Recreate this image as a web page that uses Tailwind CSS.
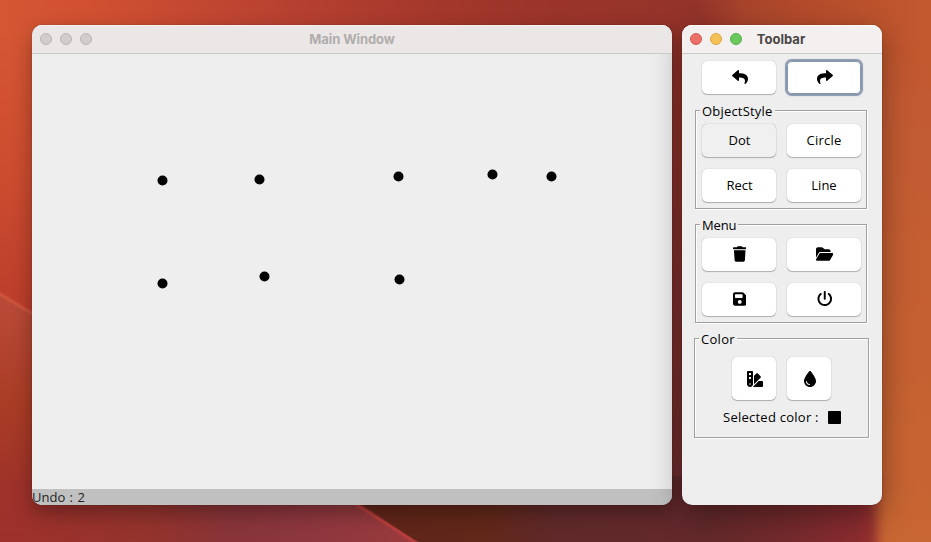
<!DOCTYPE html>
<html lang="en">
<head>
<meta charset="utf-8">
<title>Main Window</title>
<script src="https://cdn.jsdelivr.net/npm/@tailwindcss/browser@4"></script>
</head>
<body class="relative w-[931px] h-[542px] overflow-hidden bg-[#9a322a] font-['Open_Sans','Noto_Sans',sans-serif] text-[13px] font-medium text-black">
<!-- Desktop wallpaper -->
<svg class="absolute inset-0" width="931" height="542" viewBox="0 0 931 542">
  <defs>
    <linearGradient id="top" gradientUnits="userSpaceOnUse" x1="0" y1="0" x2="931" y2="0">
      <stop offset="0" stop-color="#d55633"/><stop offset=".11" stop-color="#cf4f31"/><stop offset=".26" stop-color="#bd4431"/><stop offset=".45" stop-color="#a6382c"/><stop offset=".58" stop-color="#9b3429"/><stop offset=".75" stop-color="#93332a"/><stop offset=".8" stop-color="#a8442b"/><stop offset=".86" stop-color="#b34b2b"/><stop offset="1" stop-color="#c3592f"/>
    </linearGradient>
    <linearGradient id="left" x1="0" y1="0" x2="0" y2="1"><stop offset="0" stop-color="#d55633"/><stop offset=".3" stop-color="#cb4b2f"/><stop offset=".55" stop-color="#bb3d2b"/><stop offset="1" stop-color="#a83028"/></linearGradient>
    <linearGradient id="fold" gradientUnits="userSpaceOnUse" x1="0" y1="295" x2="0" y2="542"><stop offset="0" stop-color="#ba4b38"/><stop offset=".45" stop-color="#a93c25"/><stop offset=".75" stop-color="#a03329"/><stop offset="1" stop-color="#9d302b"/></linearGradient>
    <linearGradient id="base" gradientUnits="userSpaceOnUse" x1="0" y1="0" x2="931" y2="0"><stop offset="0" stop-color="#9d302b" stop-opacity="0"/><stop offset=".04" stop-color="#9c312b"/><stop offset=".17" stop-color="#93332d"/><stop offset=".25" stop-color="#883439"/><stop offset=".32" stop-color="#8c363e"/><stop offset=".43" stop-color="#983a3c"/></linearGradient>
    <linearGradient id="dark" gradientUnits="userSpaceOnUse" x1="350" y1="0" x2="900" y2="0"><stop offset="0" stop-color="#5f2419"/><stop offset=".25" stop-color="#612719"/><stop offset=".37" stop-color="#60292a"/><stop offset=".65" stop-color="#64292b"/><stop offset=".8" stop-color="#752a2d"/><stop offset="1" stop-color="#992d30"/></linearGradient>
    <linearGradient id="right" gradientUnits="userSpaceOnUse" x1="0" y1="0" x2="0" y2="542"><stop offset="0" stop-color="#c0572f"/><stop offset="1" stop-color="#c86633"/></linearGradient>
    <linearGradient id="gap" x1="0" y1="0" x2="0" y2="1"><stop offset="0" stop-color="#98342b"/><stop offset="1" stop-color="#702e31"/></linearGradient>
    <filter id="soft" x="-50%" y="-50%" width="200%" height="200%"><feGaussianBlur stdDeviation="6"/></filter>
    <filter id="glow"><feGaussianBlur stdDeviation="1"/></filter>
  </defs>
  <rect width="931" height="542" fill="url(#top)"/>
  <rect y="30" width="60" height="512" fill="url(#left)"/>
  <path d="M0 294 L414 542 H0Z" fill="url(#fold)"/>
  <path d="M0 480 H314 L414 542 H0Z" fill="url(#base)"/>
  <rect x="660" y="50" width="50" height="480" fill="url(#gap)"/>
  <path d="M312 476 H870 V542 H418Z" fill="url(#dark)"/>
  <rect x="860" y="476" width="71" height="66" fill="#902d30"/>
  <path d="M868 60 H960 V580 H878Z" fill="url(#right)" filter="url(#soft)"/>
  <path d="M-5 291 L40 318" stroke="#da5f43" stroke-width="2" filter="url(#glow)"/>
  <path d="M350 499 L420 546" stroke="#c7424a" stroke-width="2" filter="url(#glow)"/>
</svg>

<main class="relative flex gap-[10px] pl-8 pt-[25px]">
  <section class="flex h-[480px] w-[640px] flex-col overflow-hidden rounded-[10px] bg-[#eeeeee] shadow-[0_0_1px_rgba(0,0,0,.5),0_8px_20px_rgba(0,0,0,.32)]">
    <header class="relative flex h-[29px] shrink-0 items-center justify-center border-b border-[#cac8c8] bg-[#ebe7e6] shadow-[inset_0_1px_0_#f4f1f0]">
      <div class="absolute left-2 top-2 flex gap-2">
        <i class="size-3 rounded-full border border-[#b9b5b4] bg-[#d1cdcc]"></i>
        <i class="size-3 rounded-full border border-[#b9b5b4] bg-[#d1cdcc]"></i>
        <i class="size-3 rounded-full border border-[#b9b5b4] bg-[#d1cdcc]"></i>
      </div>
      <h1 class="font-['Inter'] text-[13px] font-bold leading-none tracking-[-0.1px] text-[#b0adac]">Main Window</h1>
    </header>
    <svg class="block shrink-0" width="640" height="435" viewBox="32 54 640 435">
      <circle cx="162.5" cy="180.5" r="5"/><circle cx="259.5" cy="179.5" r="5"/><circle cx="398.5" cy="176.5" r="5"/><circle cx="492.5" cy="174.5" r="5"/><circle cx="551.5" cy="176.5" r="5"/>
      <circle cx="162.5" cy="283.5" r="5"/><circle cx="264.5" cy="276.5" r="5"/><circle cx="399.5" cy="279.5" r="5"/>
    </svg>
    <footer class="h-4 bg-[#c0c0c0] leading-4 text-[#222]"><span class="[word-spacing:1px]">Undo : 2</span></footer>
  </section>

  <section class="h-[480px] w-[200px] rounded-[10px] bg-[#eeeeee] shadow-[0_0_1px_rgba(0,0,0,.5),0_10px_30px_rgba(0,0,0,.38)]">
    <header class="relative flex h-[29px] items-center justify-center rounded-t-[10px] border-b border-[#cdc8ca] bg-[#f4f0ef] shadow-[inset_0_1px_0_#fffafa]">
      <div class="absolute left-2 top-2 flex gap-2">
        <i class="size-3 rounded-full border border-[#d9594f] bg-[#ed7066]"></i>
        <i class="size-3 rounded-full border border-[#dda544] bg-[#f5c157]"></i>
        <i class="size-3 rounded-full border border-[#55ad48] bg-[#6ac95c]"></i>
      </div>
      <h1 class="mr-[2px] font-['Inter'] text-[13px] font-bold leading-none tracking-[0.05px] text-[#4b4848]">Toolbar</h1>
    </header>
    <div class="flex gap-[11px] pl-5 pt-[7px]">
      <button class="flex h-[33px] w-[74px] items-center justify-center rounded-[5px] bg-white pl-px shadow-[0_0_1px_rgba(0,0,0,.3),0_1px_1px_rgba(0,0,0,.25)]"><svg width="16" height="16" viewBox="0 0 512 512" class="-mt-px"><path d="M8.309 189.836L184.313 37.851C199.719 24.546 224 35.347 224 56.015v80.053c160.629 1.839 288 34.032 288 186.258 0 61.441-39.581 122.309-83.333 154.132-13.653 9.931-33.111-2.533-28.077-18.631 45.344-145.012-21.507-183.51-176.59-185.742V360c0 20.7-24.3 31.453-39.687 18.164l-176.004-152c-11.071-9.562-11.086-26.753 0-36.328z"/></svg></button>
      <button class="flex h-[33px] w-[74px] items-center justify-center rounded-[5px] bg-white pl-px shadow-[0_0_0_1px_#8797ae,0_0_1px_1.5px_#8797ae,inset_0_0_0_1px_#8797ae]"><svg width="16" height="16" viewBox="0 0 512 512" class="-mt-px -scale-x-100"><path d="M8.309 189.836L184.313 37.851C199.719 24.546 224 35.347 224 56.015v80.053c160.629 1.839 288 34.032 288 186.258 0 61.441-39.581 122.309-83.333 154.132-13.653 9.931-33.111-2.533-28.077-18.631 45.344-145.012-21.507-183.51-176.59-185.742V360c0 20.7-24.3 31.453-39.687 18.164l-176.004-152c-11.071-9.562-11.086-26.753 0-36.328z"/></svg></button>
    </div>

    <div class="relative ml-[13px] mt-[16px] h-[99px] w-[172px] border border-[#a0a0a0] pl-[6px] pt-[13px] shadow-[1px_1px_0_#fff,inset_1px_1px_0_#fff]">
      <h2 class="absolute left-[4px] top-[-8px] bg-[#eeeeee] px-[2px] leading-4 tracking-[0.2px]">ObjectStyle</h2>
      <div class="grid grid-cols-[74px_74px] gap-x-[11px] gap-y-[12px]">
        <button class="h-[33px] rounded-[5px] bg-[#f0f0f0] pl-px shadow-[0_0_1px_rgba(0,0,0,.4),0_1px_1px_rgba(0,0,0,.25)]">Dot</button>
        <button class="h-[33px] rounded-[5px] bg-white shadow-[0_0_1px_rgba(0,0,0,.3),0_1px_1px_rgba(0,0,0,.25)] tracking-[0.25px]">Circle</button>
        <button class="h-[33px] rounded-[5px] bg-white pl-px shadow-[0_0_1px_rgba(0,0,0,.3),0_1px_1px_rgba(0,0,0,.25)]">Rect</button>
        <button class="h-[33px] rounded-[5px] bg-white shadow-[0_0_1px_rgba(0,0,0,.3),0_1px_1px_rgba(0,0,0,.25)]">Line</button>
      </div>
    </div>

    <div class="relative ml-[13px] mt-[15px] h-[99px] w-[172px] border border-[#a0a0a0] pl-[6px] pt-[13px] shadow-[1px_1px_0_#fff,inset_1px_1px_0_#fff]">
      <h2 class="absolute left-[4px] top-[-8px] bg-[#eeeeee] px-[2px] leading-4 tracking-[-0.15px]">Menu</h2>
      <div class="grid grid-cols-[74px_74px] gap-x-[11px] gap-y-[12px]">
        <button class="flex h-[33px] items-center justify-center rounded-[5px] bg-white pl-px shadow-[0_0_1px_rgba(0,0,0,.3),0_1px_1px_rgba(0,0,0,.25)]"><svg width="13.5" height="16" viewBox="0 0 448 512" class="-mt-px"><path d="M135.2 17.7L128 32H32C14.3 32 0 46.3 0 64S14.3 96 32 96H416c17.7 0 32-14.3 32-32s-14.3-32-32-32H320l-7.2-14.3C307.4 6.8 296.3 0 284.2 0H163.8c-12.1 0-23.2 6.8-28.6 17.7zM416 128H32L53.2 467c1.6 25.3 22.6 45 47.9 45H346.9c25.3 0 46.3-19.7 47.9-45L416 128z"/></svg></button>
        <button class="flex h-[33px] items-center justify-center rounded-[5px] bg-white pl-px shadow-[0_0_1px_rgba(0,0,0,.3),0_1px_1px_rgba(0,0,0,.25)]"><svg width="17.5" height="16" viewBox="0 0 576 512" class="-mt-px"><path d="M88.7 223.8L0 375.8V96C0 60.7 28.7 32 64 32H181.5c17 0 33.3 6.7 45.3 18.7l26.5 26.5c12 12 28.3 18.7 45.3 18.7H416c35.3 0 64 28.7 64 64v32H144c-22.8 0-43.8 12.1-55.3 31.8zm27.6 16.1C122.1 230 132.6 224 144 224H544c11.5 0 22 6.1 27.7 16.1s5.7 22.2-.1 32.1l-112 192C453.9 474 443.4 480 432 480H32c-11.5 0-22-6.1-27.7-16.1s-5.7-22.2 .1-32.1l112-192z"/></svg></button>
        <button class="flex h-[33px] items-center justify-center rounded-[5px] bg-white pl-px shadow-[0_0_1px_rgba(0,0,0,.3),0_1px_1px_rgba(0,0,0,.25)]"><svg width="13.5" height="16" viewBox="0 0 448 512" class="-mt-px"><path d="M64 32C28.7 32 0 60.7 0 96V416c0 35.3 28.7 64 64 64H384c35.3 0 64-28.7 64-64V173.3c0-17-6.7-33.3-18.7-45.3L352 50.7C340 38.7 323.7 32 306.7 32H64zm0 96c0-17.7 14.3-32 32-32H288c17.7 0 32 14.3 32 32v64c0 17.7-14.3 32-32 32H96c-17.7 0-32-14.3-32-32V128zM224 288a64 64 0 1 1 0 128 64 64 0 1 1 0-128z" fill-rule="evenodd"/></svg></button>
        <button class="flex h-[33px] items-center justify-center rounded-[5px] bg-white pl-px shadow-[0_0_1px_rgba(0,0,0,.3),0_1px_1px_rgba(0,0,0,.25)]"><svg width="15.5" height="15.5" viewBox="0 0 512 512" class="-mt-px"><path d="M288 32c0-17.7-14.3-32-32-32s-32 14.3-32 32V256c0 17.7 14.3 32 32 32s32-14.3 32-32V32zM143.5 120.6c13.6-11.3 15.4-31.5 4.1-45.1s-31.5-15.4-45.1-4.1C49.7 115.4 16 181.8 16 256c0 132.5 107.5 240 240 240s240-107.5 240-240c0-74.2-33.8-140.6-86.6-184.6c-13.6-11.3-33.8-9.4-45.1 4.1s-9.4 33.8 4.1 45.1c38.9 32.3 63.5 81 63.5 135.4c0 97.2-78.8 176-176 176s-176-78.8-176-176c0-54.4 24.7-103.1 63.5-135.4z"/></svg></button>
      </div>
    </div>

    <div class="relative ml-[12px] mt-[15px] h-[100px] w-[175px] border border-[#a0a0a0] pt-[18px] shadow-[1px_1px_0_#fff,inset_1px_1px_0_#fff]">
      <h2 class="absolute left-[4px] top-[-8px] bg-[#eeeeee] px-[2px] leading-4 tracking-[0.3px]">Color</h2>
      <div class="flex gap-[11px] pl-[37px]">
        <button class="flex h-[43px] w-11 items-center justify-center rounded-[5px] bg-white pl-px pt-px shadow-[0_0_1px_rgba(0,0,0,.3),0_1px_1px_rgba(0,0,0,.25)]"><svg width="16" height="16" viewBox="0 0 512 512"><path fill-rule="evenodd" d="M0 32C0 14.3 14.3 0 32 0H160c17.7 0 32 14.3 32 32V416c0 53-43 96-96 96s-96-43-96-96V32zM223.6 425.9c.3-3.3 .4-6.6 .4-9.9V154l75.4-75.4c12.5-12.5 32.8-12.5 45.3 0l90.5 90.5c12.5 12.5 12.5 32.8 0 45.3L223.6 425.9zM182.8 512l192-192H480c17.7 0 32 14.3 32 32V480c0 17.7-14.3 32-32 32H182.8zM128 64H64v64h64V64zM64 192v64h64V192H64zM96 440a24 24 0 1 0 0-48 24 24 0 1 0 0 48z"/></svg></button>
        <button class="flex h-[43px] w-11 items-center justify-center rounded-[5px] bg-white pl-px pt-px shadow-[0_0_1px_rgba(0,0,0,.3),0_1px_1px_rgba(0,0,0,.25)]"><svg width="12" height="16" viewBox="0 0 384 512"><path fill-rule="evenodd" d="M192 512C86 512 0 426 0 320C0 228.8 130.2 57.7 166.6 11.7C172.6 4.2 181.5 0 191.1 0h1.8c9.6 0 18.5 4.2 24.5 11.7C253.8 57.7 384 228.8 384 320c0 106-86 192-192 192zM96 336c0-8.8-7.2-16-16-16s-16 7.2-16 16c0 61.9 50.1 112 112 112c8.8 0 16-7.2 16-16s-7.2-16-16-16c-44.2 0-80-35.8-80-80z"/></svg></button>
      </div>
      <div class="mt-[9px] flex items-center pl-[28px] leading-4"><span class="w-[105px] whitespace-nowrap tracking-[0.25px]">Selected color :</span><i class="mt-px size-[13px] rounded-[1px] bg-black"></i></div>
    </div>
  </section>
</main>
</body>
</html>
